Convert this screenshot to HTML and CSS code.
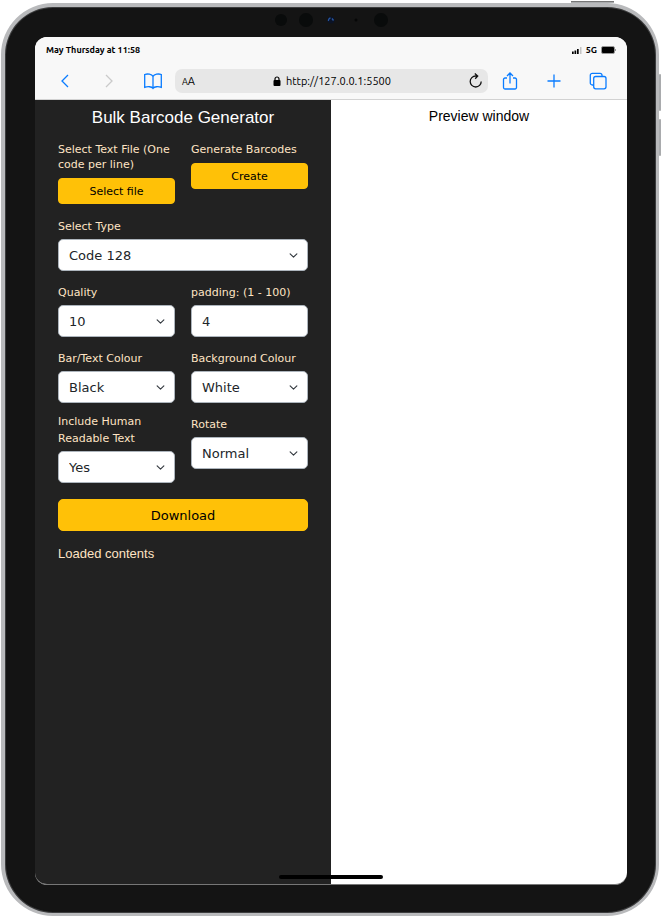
FILE: index.html
```html
<!DOCTYPE html>
<html lang="en">
<head>
<meta charset="utf-8">
<meta name="viewport" content="width=device-width, initial-scale=1">
<title>Bulk Barcode Generator</title>
<link rel="stylesheet" href="styles.css">
</head>
<body>
<div class="device">
  <span class="key key-top"></span>
  <span class="key key-up"></span>
  <span class="key key-down"></span>
  <svg class="sensors" width="116" height="16" viewBox="0 0 116 16" aria-hidden="true">
    <circle cx="6" cy="8" r="6" fill="#090b0b"/>
    <circle cx="31" cy="8" r="7" fill="#090b0b"/>
    <circle cx="56" cy="8" r="3.500" fill="#0b1326"/>
    <path d="M53.500 9a2.500 2.500 0 0 1 2-3M57 6.500l1.500 2" fill="none" stroke="#2856a0" stroke-width="1.300"/>
    <circle cx="81" cy="8" r="1.500" fill="#060707"/>
    <circle cx="106" cy="8" r="7" fill="#090b0b"/>
  </svg>
  <div class="screen">
    <header class="browser">
      <div class="status">
        <span>May Thursday at 11:58</span>
        <span class="signals">
          <svg width="10" height="7" viewBox="0 0 10 7" aria-hidden="true"><path d="M0 4.500h1.700V7H0zM2.500 3.500h1.700V7H2.500zM5 2h1.700v5H5z" fill="#000"/><path d="M8 0h1.500v7H8z" fill="#c4c4c4"/></svg>
          <span>5G</span>
          <svg width="15" height="8" viewBox="0 0 15 8" aria-hidden="true"><rect x=".5" y=".5" width="13" height="7" rx="1.500" fill="#000" stroke="#999"/><path d="M14.500 3v2" stroke="#999"/></svg>
        </span>
      </div>
      <div class="toolbar">
        <div class="nav">
          <button type="button" aria-label="Back"><svg width="18" height="18" viewBox="0 0 18 18"><path d="M12 3 6 9l6 6"/></svg></button>
          <button type="button" aria-label="Forward" class="off"><svg width="18" height="18" viewBox="0 0 18 18"><path d="m6 3 6 6-6 6"/></svg></button>
          <button type="button" aria-label="Bookmarks"><svg width="18" height="18" viewBox="0 0 18 18"><path d="M9 4.500C7.800 2 3.500 1.500.7 2.500v12.800c3-1 7-.8 8.300 1 1.300-1.800 5.300-2 8.300-1V2.500C14.500 1.500 10.200 2 9 4.500zM9 4.500v11.500"/></svg></button>
        </div>
        <div class="address">
          <span class="aa"><small>A</small>A</span>
          <span class="url"><svg width="8" height="10" viewBox="0 0 8 10" aria-hidden="true"><rect x=".5" y="4" width="7" height="6" rx="1"/><path d="M2 4.500V3a2 2 0 0 1 4 0v1.500" fill="none" stroke="#000" stroke-width="1.200"/></svg>http://127.0.0.1:5500</span>
          <button type="button" class="reload" aria-label="Reload"><svg width="14" height="16" viewBox="0 0 14 16"><path d="M12.200 8.500a5.500 5.500 0 1 1-5.500-5.500h2M5.800.5 8.700 3 6.200 5.700"/></svg></button>
        </div>
        <div class="actions">
          <button type="button" aria-label="Share"><svg width="18" height="18" viewBox="0 0 18 18"><path d="M6 6H4a1.500 1.500 0 0 0-1.500 1.500v8A1.500 1.500 0 0 0 4 17h10a1.500 1.500 0 0 0 1.500-1.500v-8A1.500 1.500 0 0 0 14 6h-2M9 11.500V1M6 4l3-3 3 3"/></svg></button>
          <button type="button" aria-label="New tab"><svg width="18" height="18" viewBox="0 0 18 18"><path d="M9 2.500v13M2.500 9h13"/></svg></button>
          <button type="button" aria-label="Tabs"><svg width="18" height="18" viewBox="0 0 18 18"><rect x="4.700" y="4.500" width="12.300" height="12.300" rx="2"/><path d="M4.500 13H3.300a2 2 0 0 1-2-2V3.300a2 2 0 0 1 2-2H11a2 2 0 0 1 2 2v1"/></svg></button>
        </div>
      </div>
    </header>
    <main class="page">
      <section class="panel">
        <h1>Bulk Barcode Generator</h1>
        <form class="form">
          <div class="cols">
            <div class="field compact"><label for="file">Select Text File (One code per line)</label><button type="button" id="file" class="gold">Select file</button></div>
            <div class="field compact"><label for="create">Generate Barcodes</label><button type="button" id="create" class="gold">Create</button></div>
          </div>
          <div class="field type"><label for="type">Select Type</label><select id="type"><option>Code 128</option></select></div>
          <div class="cols pairs">
            <div class="field"><label for="quality">Quality</label><select id="quality"><option>10</option></select></div>
            <div class="field"><label for="padding">padding: (1 - 100)</label><input id="padding" type="text" inputmode="numeric" value="4"></div>
            <div class="field"><label for="bar">Bar/Text Colour</label><select id="bar"><option>Black</option></select></div>
            <div class="field"><label for="background">Background Colour</label><select id="background"><option>White</option></select></div>
            <div class="field"><label for="human">Include Human Readable Text</label><select id="human"><option>Yes</option></select></div>
            <div class="field"><label for="rotate">Rotate</label><select id="rotate"><option>Normal</option></select></div>
          </div>
          <button type="button" class="gold download">Download</button>
        </form>
        <p class="loaded">Loaded contents</p>
      </section>
      <section class="preview"><h2>Preview window</h2></section>
    </main>
    <span class="home-bar"></span>
  </div>
</div>
</body>
</html>
```
FILE: styles.css
```css
* { box-sizing: border-box; }

body {
  margin: 0;
  min-height: 100vh;
  display: flex;
  padding: 3px 2px 0 1px;
  background: #fff;
  font-family: "Liberation Sans", Arial, sans-serif;
}

button, input, select { font: inherit; }

.device {
  position: relative;
  flex: 1;
  display: flex;
  padding: 30px 29px 28px 30px;
  border: 4px solid #b9babc;
  border-width: 4px 3px 3px 4px;
  border-radius: 52px;
  background: #141414;
  box-shadow: inset 0 0 0 1px #3c3d3e, inset 0 0 1px 1px #222;
}

.key { position: absolute; background: #a9abad; }
.key-top { top: -6px; right: 42px; width: 43px; height: 2px; border-top: 1px solid #777; }
.key-up, .key-down { right: -5px; width: 2px; height: 37px; border-radius: 1px; }
.key-up { top: 67px; }
.key-down { top: 112px; }

.sensors { position: absolute; top: 5px; left: 50%; margin-left: -56px; }

.screen {
  position: relative;
  flex: 1;
  display: flex;
  flex-direction: column;
  overflow: hidden;
  border-radius: 12px;
  border-bottom: 1px solid #777;
  background: #fff;
}

.browser {
  background: #f8f8f8;
  border-bottom: 1px solid #d2d2d2;
  font-family: Ubuntu, "Noto Sans", sans-serif;
  color: #000;
}

.status {
  display: flex;
  justify-content: space-between;
  padding: 6px 11px 0;
  font-family: Ubuntu, "Open Sans", sans-serif;
  font-size: 9px;
  font-weight: 700;
  line-height: 14px;
}

.signals { display: flex; align-items: center; gap: 4px; }

.toolbar {
  display: flex;
  align-items: center;
  gap: 13px;
  padding: 12px 20px 6px 21px;
}

.nav, .actions { display: flex; gap: 26px; }

.browser button {
  display: flex;
  padding: 0;
  border: 0;
  background: none;
}

.browser button svg { fill: none; stroke: #0a7cff; stroke-width: 1.3; }
.browser .off svg { stroke: #cacaca; }
.browser .reload svg { stroke: #111; }

.address {
  flex: 1;
  display: flex;
  align-items: center;
  justify-content: space-between;
  height: 24px;
  padding: 0 5px 0 7px;
  border-radius: 7px;
  background: #e7e7e7;
  font-size: 11px;
}

.aa small { font-size: 9px; }
.url { display: flex; align-items: center; gap: 5px; }

.page { flex: 1; display: grid; grid-template-columns: 1fr 1fr; }

.panel {
  padding: 6px 23px 20px;
  background: #222;
  color: #ffe4c4;
}

.preview { padding-top: 6px; color: #000; }

h1, h2 { margin: 0; font-weight: 400; text-align: center; }
h1 { font-size: 17px; line-height: 24px; color: #fff; }
h2 { font-size: 14px; line-height: 20px; }

.form {
  margin-top: 12px;
  font-family: Verdana, "DejaVu Sans", sans-serif;
}

.cols { display: grid; grid-template-columns: 1fr 1fr; gap: 10px 16px; }
.type { margin: 11px 0 10px; }

.field label {
  display: flex;
  align-items: flex-end;
  min-height: 20px;
  margin-bottom: 4px;
  font-size: 11px;
  line-height: 17px;
}

.compact label { min-height: 0; margin-bottom: 6px; line-height: 15px; }

.field select, .field input {
  display: block;
  width: 100%;
  height: 32px;
  padding: 0 10px;
  border: 1px solid #adb5bd;
  border-radius: 5px;
  background: #fff;
  color: #212529;
  font-size: 13px;
}

.field select {
  appearance: none;
  background: #fff url("data:image/svg+xml,%3Csvg xmlns='http://www.w3.org/2000/svg' viewBox='0 0 16 16'%3E%3Cpath fill='none' stroke='%23343a40' stroke-linecap='round' stroke-linejoin='round' stroke-width='2' d='m2 5 6 6 6-6'/%3E%3C/svg%3E") no-repeat right 9px center / 9px 9px;
}

.gold {
  display: block;
  width: 100%;
  height: 26px;
  padding: 0;
  border: 1px solid #ffc107;
  border-radius: 4px;
  background: #ffc107;
  color: #000;
  font-size: 11px;
}

.download { height: 32px; margin-top: 16px; border-radius: 5px; font-size: 13px; }

.loaded { margin: 13px 0 0; font-size: 13px; line-height: 20px; }

.home-bar {
  position: absolute;
  bottom: 5px;
  left: 50%;
  width: 104px;
  height: 4px;
  margin-left: -52px;
  border-radius: 2px;
  background: #000;
}
```
